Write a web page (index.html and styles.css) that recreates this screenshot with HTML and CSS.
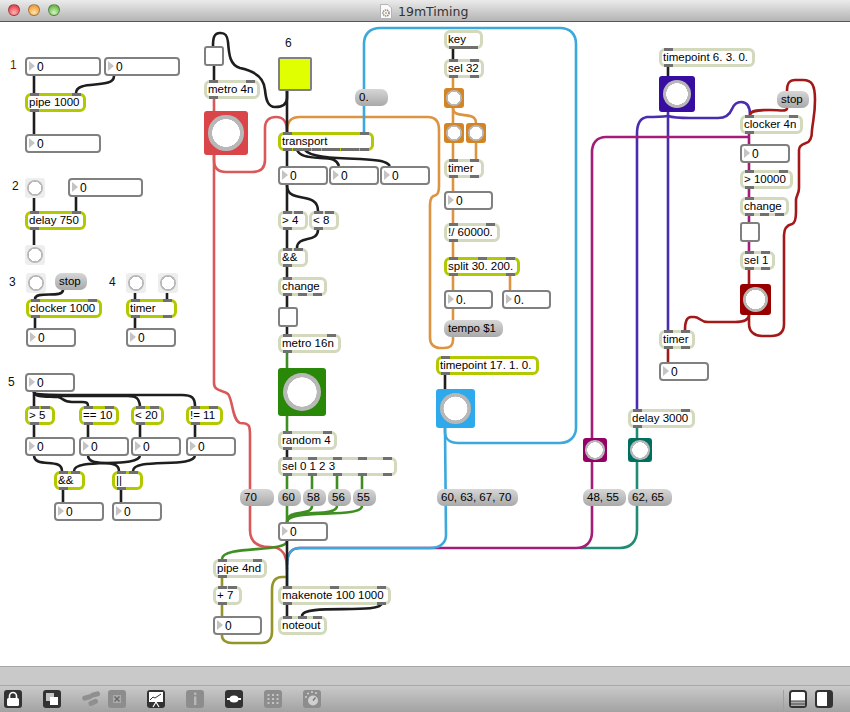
FILE: index.html
```html
<!DOCTYPE html>
<html lang="en">
<head>
    <meta charset="UTF-8">
    <title>19mTiming</title>
    <link rel="stylesheet" href="styles.css">
</head>
<body>
<div class="window">
    <header class="titlebar">
        <span class="light light-red"></span>
        <span class="light light-orange"></span>
        <span class="light light-green"></span>
        <div class="title">
            <svg class="doc-icon" width="12" height="15" viewBox="0 0 12 15">
                <path d="M.5.5H8L11.5 4V14.5H.5Z" fill="#fafafa" stroke="#b5b5b5"/>
                <circle cx="6" cy="9" r="3" fill="none" stroke="#8a8f96" stroke-width="1.6" stroke-dasharray="1.4 .7"/>
                <circle cx="6" cy="9" r="1" fill="#e0a040"/>
            </svg>
            <span>19mTiming</span>
        </div>
    </header>

    <main class="canvas">
        <svg class="wires" width="850" height="644" viewBox="0 22 850 644">
            <g class="wire-teal">
                <path d="M637 428V438"/>
                <path d="M637 462V530C637 542 630 548 620 548H580"/>
            </g>
            <g class="wire-purple">
                <path d="M668 112V330"/>
                <path d="M668 116C660 117 652 117 647 117C640 118 637 124 637 134V409"/>
                <path d="M668 116C674 118 680 118 690 118H718C726 118 730 114 732 109C734 104 737 102 741 102C747 102 750 106 750 115"/>
            </g>
            <g class="wire-magenta">
                <path d="M749 137H606C597 137 592 143 592 152V438"/>
                <path d="M592 462V532C592 542 586 548 576 548H300C292 548 287 552 287 565"/>
                <path d="M749 134V144M749 163V170M749 189V197M749 216V222M749 242V251"/>
            </g>
            <g class="wire-darkred">
                <path d="M749 270V284M668 349V362"/>
                <path d="M787 108C787 112 780 110 770 110C760 110 750 110 750 115"/>
                <path d="M749 315V324C749 332 755 336 762 336H771C780 336 784 332 784 324V235C784 228 788 225 792 224C795 223 796 218 796 212V200C796 196 799 194 799 188V150C799 145 803 144 806 143C810 142 812 138 812 130C813 120 815 115 815 100C815 85 812 80 803 80H795C790 80 787 82 787 91"/>
                <path d="M749 315C749 320 745 322 735 322H708C700 322 700 317 694 317H691C687 317 685 320 685 330"/>
            </g>
            <g class="wire-orange">
                <path d="M453 337V340C453 346 450 348 444 348H440C434 348 430 344 430 338V205C430 198 432 196 436 195C438 194 439 190 439 186V130C439 120 434 117 428 117H300C292 117 287 120 287 132"/>
                <path d="M453 78V88M453 108V123M453 143V159M476 143V159M453 178V191M453 210V223M453 242V257M510 275V290M453 275V290M453 309V320"/>
                <path d="M453 108C453 120 476 110 476 123"/>
            </g>
            <g class="wire-red">
                <path d="M214 99V111"/>
                <path d="M214 155V383C214 392 224 390 228 394C233 400 232 420 240 423C250 423 250 426 250 436V530C250 545 262 547 270 547C283 547 287 555 287 570"/>
                <path d="M214 155V160C214 168 218 172 226 172H252C261 172 265 168 265 160V128C265 120 270 117 276 117C284 117 287 122 287 132"/>
            </g>
            <g class="wire-olive">
                <path d="M222 577V586M222 603V616"/>
                <path d="M222 634V636C222 640 226 643 232 643H262C268 643 272 639 272 632V590C272 581 276 577 282 577H287"/>
            </g>
            <g class="wire-green">
                <path d="M287 353V368M287 416V431M287 476V489M312 476V489M337 476V489M362 476V489M287 506V522"/>
                <path d="M312 506C312 517 287 508 287 522"/>
                <path d="M337 506C337 518 287 508 287 522"/>
                <path d="M362 506C362 519 287 508 287 522"/>
                <path d="M287 541C287 553 222 545 222 559"/>
            </g>
            <g class="wire-blue">
                <path d="M445 428V432C445 439 450 443 458 443H560C570 443 576 436 576 428V44C576 34 570 28 560 28H380C370 28 364 34 364 44V132"/>
                <path d="M445 428L446 535C446 543 440 548 430 548H300C292 548 287 552 287 565V586"/>
            </g>
            <g class="wire-black">
                <path d="M34 76V93M34 112V134M34 198V211M76 197V211M34 230V245M35 318V328M135 293V299M167 293V299M135 318V328"/>
                <path d="M114 76C114 90 76 79 76 93"/>
                <path d="M63 290C63 299 35 290 35 299"/>
                <path d="M34 392V406M34 425V437M88 425V437M140 425V437M195 425V437M63 489V502M121 489V502"/>
                <path d="M34 392C34 398 50 396 58 397C64 398 62 402 72 402H82C87 402 88 403 88 406"/>
                <path d="M34 392C34 396 50 396 70 396H128C136 396 139 398 140 406"/>
                <path d="M34 392C34 395 50 395 70 395H182C192 395 195 398 195 406"/>
                <path d="M34 455C34 469 62 457 62 471"/>
                <path d="M140 455C140 469 74 457 74 471"/>
                <path d="M88 455C88 469 119 457 119 471"/>
                <path d="M195 455C195 469 133 457 133 471"/>
                <path d="M214 66V80"/>
                <path d="M287 91V98C287 106 280 107 275 107C268 107 266 100 265 90C264 75 250 70 240 68C230 65 229 55 228 42C227 32 222 33 220 33C214 33 213 38 213 46"/>
                <path d="M287 91V132M287 150V166M287 185V211M287 230V248M287 266V277M287 295V307M287 327V334M287 449V457M287 541V586M287 603V616"/>
                <path d="M297 150C300 156 306 157 320 158C333 158 337 160 339 166"/>
                <path d="M305 150C310 157 330 158 360 159C380 160 386 161 390 166"/>
                <path d="M287 185C287 205 318 190 318 211"/>
                <path d="M318 230C318 243 297 235 297 248"/>
                <path d="M382 603C382 615 302 603 302 616"/>
                <path d="M453 49V59M445 375V389M668 67V76"/>
            </g>
        </svg>

        <span class="label label-one">1</span>
        <span class="label label-two">2</span>
        <span class="label label-three">3</span>
        <span class="label label-four">4</span>
        <span class="label label-five">5</span>
        <span class="label label-six">6</span>

        <!-- 1 pipe -->
        <div class="num n-pipe-a">0</div>
        <div class="num n-pipe-b">0</div>
        <div class="obj lime o-pipe"><span class="ports in"><b></b><b></b></span>pipe 1000<span class="ports out"><b></b></span></div>
        <div class="num n-pipe-c">0</div>

        <!-- 2 delay -->
        <div class="bang b-delay-a"></div>
        <div class="num n-delay">0</div>
        <div class="obj lime o-delay"><span class="ports in"><b></b><b></b></span>delay 750<span class="ports out"><b></b></span></div>
        <div class="bang b-delay-b"></div>

        <!-- 3 clocker -->
        <div class="bang b-clocker"></div>
        <div class="msg m-stop-a">stop</div>
        <div class="obj lime o-clocker"><span class="ports in"><b></b><b></b></span>clocker 1000<span class="ports out"><b></b></span></div>
        <div class="num n-clocker">0</div>

        <!-- 4 timer -->
        <div class="bang b-timer-a"></div>
        <div class="bang b-timer-b"></div>
        <div class="obj lime o-timer"><span class="ports in"><b></b><b></b></span>timer<span class="ports out"><b></b><b></b></span></div>
        <div class="num n-timer">0</div>

        <!-- 5 logic -->
        <div class="num n-logic">0</div>
        <div class="obj lime o-gt5"><span class="ports in"><b></b><b></b></span>&gt; 5<span class="ports out"><b></b></span></div>
        <div class="obj lime o-eq10"><span class="ports in"><b></b><b></b></span>== 10<span class="ports out"><b></b></span></div>
        <div class="obj lime o-lt20"><span class="ports in"><b></b><b></b></span>&lt; 20<span class="ports out"><b></b></span></div>
        <div class="obj lime o-ne11"><span class="ports in"><b></b><b></b></span>!= 11<span class="ports out"><b></b></span></div>
        <div class="num n-gt5">0</div>
        <div class="num n-eq10">0</div>
        <div class="num n-lt20">0</div>
        <div class="num n-ne11">0</div>
        <div class="obj lime o-and"><span class="ports in"><b></b><b></b></span>&amp;&amp;<span class="ports out"><b></b></span></div>
        <div class="obj lime o-or"><span class="ports in"><b></b><b></b></span>||<span class="ports out"><b></b></span></div>
        <div class="num n-and">0</div>
        <div class="num n-or">0</div>

        <!-- metro 4n -->
        <div class="toggle t-metro"></div>
        <div class="obj o-metro4"><span class="ports in"><b></b><b></b></span>metro 4n<span class="ports out"><b></b></span></div>
        <div class="bang bang-red b-metro4"></div>

        <!-- transport column -->
        <div class="yellow"></div>
        <div class="msg m-zero">0.</div>
        <div class="obj lime o-transport"><span class="ports in"><b></b><b></b></span>transport<span class="ports out"><b></b><b></b><b></b><b></b><b></b><b></b><b></b><b></b><b></b></span></div>
        <div class="num n-bars">0</div>
        <div class="num n-beats">0</div>
        <div class="num n-units">0</div>
        <div class="obj o-gt4"><span class="ports in"><b></b><b></b></span>&gt; 4<span class="ports out"><b></b></span></div>
        <div class="obj o-lt8"><span class="ports in"><b></b><b></b></span>&lt; 8<span class="ports out"><b></b></span></div>
        <div class="obj o-and2"><span class="ports in"><b></b><b></b></span>&amp;&amp;<span class="ports out"><b></b></span></div>
        <div class="obj o-change"><span class="ports in"><b></b></span>change<span class="ports out"><b></b><b></b><b></b></span></div>
        <div class="toggle t-column"></div>
        <div class="obj o-metro16"><span class="ports in"><b></b><b></b></span>metro 16n<span class="ports out"><b></b></span></div>
        <div class="bang bang-green b-metro16"></div>
        <div class="obj o-random"><span class="ports in"><b></b><b></b></span>random 4<span class="ports out"><b></b></span></div>
        <div class="obj o-sel"><span class="ports in"><b></b><b></b><b></b><b></b><b></b></span>sel 0 1 2 3<span class="ports out"><b></b><b></b><b></b><b></b><b></b></span></div>
        <div class="msg m-70">70</div>
        <div class="msg m-60">60</div>
        <div class="msg m-58">58</div>
        <div class="msg m-56">56</div>
        <div class="msg m-55">55</div>
        <div class="num n-note">0</div>
        <div class="obj o-pipe4"><span class="ports in"><b></b><b></b></span>pipe 4nd<span class="ports out"><b></b></span></div>
        <div class="obj o-plus7"><span class="ports in"><b></b><b></b></span>+ 7<span class="ports out"><b></b></span></div>
        <div class="num n-plus7">0</div>
        <div class="obj o-makenote"><span class="ports in"><b></b><b></b><b></b></span>makenote 100 1000<span class="ports out"><b></b><b></b></span></div>
        <div class="obj o-noteout"><span class="ports in"><b></b><b></b><b></b></span>noteout</div>

        <!-- tap tempo -->
        <div class="obj o-key">key<span class="ports out"><b></b><b></b><b></b><b></b></span></div>
        <div class="obj o-sel32"><span class="ports in"><b></b><b></b></span>sel 32<span class="ports out"><b></b><b></b></span></div>
        <div class="bang bang-orange b-tap-a"></div>
        <div class="bang bang-orange b-tap-b"></div>
        <div class="bang bang-orange b-tap-c"></div>
        <div class="obj o-taptimer"><span class="ports in"><b></b><b></b></span>timer<span class="ports out"><b></b><b></b></span></div>
        <div class="num n-tap">0</div>
        <div class="obj o-div"><span class="ports in"><b></b><b></b></span>!/ 60000.<span class="ports out"><b></b></span></div>
        <div class="obj lime o-split"><span class="ports in"><b></b><b></b><b></b></span>split 30. 200.<span class="ports out"><b></b><b></b></span></div>
        <div class="num n-split-a">0.</div>
        <div class="num n-split-b">0.</div>
        <div class="msg m-tempo">tempo $1</div>
        <div class="obj lime o-tp17"><span class="ports in"><b></b></span>timepoint 17. 1. 0.<span class="ports out"><b></b></span></div>
        <div class="bang bang-blue b-tp17"></div>
        <div class="msg m-chord-a">60, 63, 67, 70</div>

        <!-- chords -->
        <div class="bang bang-magenta b-magenta"></div>
        <div class="bang bang-teal b-teal"></div>
        <div class="msg m-chord-b">48, 55</div>
        <div class="msg m-chord-c">62, 65</div>
        <div class="obj o-delay3000"><span class="ports in"><b></b><b></b></span>delay 3000<span class="ports out"><b></b></span></div>

        <!-- timepoint 6 -->
        <div class="obj o-tp6"><span class="ports in"><b></b></span>timepoint 6. 3. 0.<span class="ports out"><b></b></span></div>
        <div class="bang bang-purple b-tp6"></div>
        <div class="msg m-stop-b">stop</div>
        <div class="obj o-clocker4"><span class="ports in"><b></b><b></b></span>clocker 4n<span class="ports out"><b></b></span></div>
        <div class="num n-clocker4">0</div>
        <div class="obj o-gt10000"><span class="ports in"><b></b><b></b></span>&gt; 10000<span class="ports out"><b></b></span></div>
        <div class="obj o-change2"><span class="ports in"><b></b></span>change<span class="ports out"><b></b><b></b><b></b></span></div>
        <div class="toggle t-right"></div>
        <div class="obj o-sel1"><span class="ports in"><b></b><b></b></span>sel 1<span class="ports out"><b></b><b></b></span></div>
        <div class="bang bang-darkred b-sel1"></div>
        <div class="obj o-timer2"><span class="ports in"><b></b><b></b></span>timer<span class="ports out"><b></b><b></b></span></div>
        <div class="num n-timer2">0</div>
    </main>

    <footer class="footer">
        <div class="statusband"></div>
        <div class="toolbar">
            <span class="tool">
                <svg width="18" height="18" viewBox="0 0 18 18"><path d="M5.5 8V6a3.5 3.5 0 0 1 7 0V8" fill="none" stroke="#fff" stroke-width="1.6"/><rect x="3" y="8" width="12" height="8" rx="1.5" fill="#fff"/></svg>
            </span>
            <span class="tool">
                <svg width="18" height="18" viewBox="0 0 18 18"><rect x="3" y="3" width="8" height="8" fill="#c4c4c4"/><rect x="7" y="7" width="8" height="8" fill="#fff"/></svg>
            </span>
            <span class="tool tool-off tool-plain">
                <svg width="18" height="18" viewBox="0 0 18 18"><g fill="#8f8f8f"><rect x="0" y="5" width="10" height="5" rx="2.5" transform="rotate(-15 5 7)"/><rect x="8" y="2" width="10" height="5" rx="2.5" transform="rotate(-15 13 4)"/><rect x="6" y="10" width="10" height="5" rx="2.5" transform="rotate(-25 11 12)"/></g></svg>
            </span>
            <span class="tool tool-off tool-near">
                <svg width="18" height="18" viewBox="0 0 18 18"><rect x="5" y="5" width="8" height="8" fill="#ababab"/><path d="M6.5 6.5l5 5M11.5 6.5l-5 5" stroke="#666" stroke-width="1.4"/></svg>
            </span>
            <span class="tool">
                <svg width="18" height="18" viewBox="0 0 18 18"><rect x="2" y="2" width="14" height="10" fill="#fff"/><path d="M3 10l3-3 2 1 6-4" fill="none" stroke="#333" stroke-width="1"/><path d="M9 12l-3 5M9 12l3 5" stroke="#fff" stroke-width="1.2"/></svg>
            </span>
            <span class="tool tool-off">
                <svg width="18" height="18" viewBox="0 0 18 18"><rect x="8" y="2.5" width="2.4" height="2.4" fill="#b8b8b8"/><rect x="8" y="6.5" width="2.4" height="8.5" fill="#b8b8b8"/></svg>
            </span>
            <span class="tool">
                <svg width="18" height="18" viewBox="0 0 18 18"><path d="M2 9H16" stroke="#fff" stroke-width="2"/><ellipse cx="9" cy="9" rx="4.5" ry="3.5" fill="#fff"/></svg>
            </span>
            <span class="tool tool-off">
                <svg width="18" height="18" viewBox="0 0 18 18"><g fill="#c4c4c4"><rect x="3.5" y="4" width="2" height="2"/><rect x="8" y="4" width="2" height="2"/><rect x="12.5" y="4" width="2" height="2"/><rect x="3.5" y="8" width="2" height="2"/><rect x="8" y="8" width="2" height="2"/><rect x="12.5" y="8" width="2" height="2"/><rect x="3.5" y="12" width="2" height="2"/><rect x="8" y="12" width="2" height="2"/><rect x="12.5" y="12" width="2" height="2"/></g></svg>
            </span>
            <span class="tool tool-off">
                <svg width="18" height="18" viewBox="0 0 18 18"><circle cx="10" cy="10.5" r="5" fill="#d0d0d0"/><path d="M10 10.5l2.5-3" stroke="#777" stroke-width="1.4"/><g fill="#d0d0d0"><circle cx="3" cy="7" r="1"/><circle cx="5" cy="3.5" r="1"/><circle cx="9" cy="2" r="1"/><circle cx="13" cy="3" r="1"/></g></svg>
            </span>
            <span class="toolbar-right">
                <span class="tool tool-frame">
                    <svg width="18" height="18" viewBox="0 0 18 18"><rect x="1" y="1" width="16" height="16" rx="2.5" fill="#fff" stroke="#333" stroke-width="2"/><rect x="2" y="11" width="14" height="5" fill="#aaa"/><path d="M2 11H16M2 14H16" stroke="#444" stroke-width="1"/></svg>
                </span>
                <span class="tool tool-frame">
                    <svg width="18" height="18" viewBox="0 0 18 18"><rect x="1" y="1" width="16" height="16" rx="2.5" fill="#fff" stroke="#333" stroke-width="2"/><rect x="12" y="1" width="5" height="16" fill="#333"/></svg>
                </span>
            </span>
        </div>
    </footer>
</div>
</body>
</html>
```

FILE: styles.css
```css
* {
    box-sizing: border-box;
}
body {
    margin: 0;
    font-family: "Liberation Sans", Arial, sans-serif;
    font-size: 11.5px;
    color: #000;
    background: #fff;
}
.window {
    display: flex;
    flex-direction: column;
    width: 850px;
    height: 712px;
    overflow: hidden;
}

/* title bar */
.titlebar {
    position: relative;
    display: flex;
    align-items: center;
    flex: 0 0 22px;
    gap: 8px;
    padding: 0 0 1px 8px;
    background: linear-gradient(#ebebeb, #b4b4b4);
    border-bottom: 1px solid #585858;
}
.light {
    width: 12px;
    height: 12px;
    border-radius: 50%;
    border: 1px solid rgba(0,0,0,0.3);
}
.light-red {
    background: radial-gradient(circle at 50% 75%, #ffb4b4, #e8434c 75%);
}
.light-orange {
    background: radial-gradient(circle at 50% 75%, #ffe4a8, #ee9c3c 75%);
}
.light-green {
    background: radial-gradient(circle at 50% 75%, #d4f4bc, #68b84c 75%);
}
.title {
    position: absolute;
    top: 4px;
    left: 380px;
    display: flex;
    gap: 6px;
    font-family: "DejaVu Sans", sans-serif;
    font-size: 12.5px;
    line-height: 15px;
    color: #333;
}

/* canvas and wires */
.canvas {
    position: relative;
    flex: 1;
    background: #fff;
}
.wires {
    position: absolute;
    top: 0;
    left: 0;
    fill: none;
    stroke-width: 2.6;
}
.wire-black { stroke: #1e1e1e; }
.wire-red { stroke: #d9585a; }
.wire-orange { stroke: #dd9440; }
.wire-blue { stroke: #3ca8dc; }
.wire-purple { stroke: #4a2cae; }
.wire-magenta { stroke: #a31c78; }
.wire-teal { stroke: #1f8c74; }
.wire-green { stroke: #3f8e22; }
.wire-darkred { stroke: #a31818; }
.wire-olive { stroke: #949428; }

.label {
    position: absolute;
    font-size: 12px;
    line-height: 14px;
    color: #111;
}
.label-one { left: 10px; top: 36px; color: #6d1c00; }
.label-two { left: 12px; top: 157px; }
.label-three { left: 9px; top: 253px; }
.label-four { left: 109px; top: 253px; }
.label-five { left: 8px; top: 353px; }
.label-six { left: 285px; top: 14px; }

/* objects */
.obj, .num, .msg, .bang, .toggle, .yellow {
    position: absolute;
}
.obj {
    height: 19px;
    padding-left: 1px;
    line-height: 13px;
    white-space: nowrap;
    background: #fff;
    border: 3px solid #d2d9bd;
    border-radius: 6px;
}
.lime {
    border-color: #b2c800;
}
.ports {
    position: absolute;
    left: -3px;
    right: -3px;
    display: flex;
    justify-content: space-between;
    padding: 0 5px;
}
.ports.in { top: -3px; }
.ports.out { bottom: -3px; }
.ports b {
    width: 9px;
    height: 3px;
    background: #707070;
}

.num {
    display: flex;
    align-items: center;
    width: 50px;
    height: 19px;
    padding-left: 10px;
    font-size: 12px;
    background: #fff;
    border: 2px solid #808080;
    border-radius: 4px;
}
.num::before {
    content: "";
    position: absolute;
    left: 2px;
    top: 2px;
    border-left: 6px solid #c4c4c4;
    border-top: 5px solid transparent;
    border-bottom: 5px solid transparent;
}

.msg {
    height: 17px;
    padding-left: 4px;
    line-height: 16px;
    white-space: nowrap;
    background: linear-gradient(#d6d6d6, #a9a9a9);
    border-radius: 7px;
}

.bang {
    display: flex;
    align-items: center;
    justify-content: center;
    width: 20px;
    height: 20px;
    background: #eeeeee;
    border-radius: 3px;
}
.bang::after {
    content: "";
    width: 80%;
    height: 80%;
    border-radius: 50%;
    background: radial-gradient(closest-side, #fff 76%, #b8b8b8 78%);
}
.bang-red { background: #d94548; }
.bang-green { background: #2a8808; }
.bang-orange { background: #d38424; }
.bang-blue { background: #2eaaec; }
.bang-magenta { background: #950066; }
.bang-teal { background: #006f60; }
.bang-purple { background: #370ea0; }
.bang-darkred { background: #980000; }

.toggle {
    width: 20px;
    height: 20px;
    background: #fff;
    border: 2px solid #808080;
    border-radius: 3px;
}
.yellow {
    left: 278px;
    top: 35px;
    width: 34px;
    height: 34px;
    background: #e0ff00;
    border: 2px solid #808080;
    border-radius: 2px;
}

/* placement on the patcher: top is measured from the canvas, y - 22 */
.n-pipe-a { left: 25px; top: 35px; width: 76px; }
.n-pipe-b { left: 104px; top: 35px; width: 76px; }
.o-pipe { left: 25px; top: 71px; width: 61px; }
.n-pipe-c { left: 25px; top: 112px; width: 76px; }

.b-delay-a { left: 25px; top: 156px; }
.n-delay { left: 68px; top: 156px; width: 75px; }
.o-delay { left: 25px; top: 189px; width: 61px; }
.b-delay-b { left: 25px; top: 223px; }

.b-clocker { left: 26px; top: 251px; }
.m-stop-a { left: 55px; top: 251px; width: 32px; }
.o-clocker { left: 26px; top: 277px; width: 76px; }
.n-clocker { left: 26px; top: 306px; }

.b-timer-a { left: 126px; top: 251px; }
.b-timer-b { left: 158px; top: 251px; }
.o-timer { left: 126px; top: 277px; width: 51px; }
.n-timer { left: 126px; top: 306px; }

.n-logic { left: 25px; top: 351px; }
.o-gt5 { left: 25px; top: 384px; width: 30px; }
.o-eq10 { left: 79px; top: 384px; width: 40px; }
.o-lt20 { left: 131px; top: 384px; width: 33px; }
.o-ne11 { left: 186px; top: 384px; width: 37px; }
.n-gt5 { left: 25px; top: 415px; }
.n-eq10 { left: 79px; top: 415px; }
.n-lt20 { left: 131px; top: 415px; }
.n-ne11 { left: 186px; top: 415px; }
.o-and { left: 54px; top: 449px; width: 31px; }
.o-or { left: 112px; top: 449px; width: 31px; }
.n-and { left: 54px; top: 480px; }
.n-or { left: 112px; top: 480px; }

.t-metro { left: 204px; top: 24px; }
.o-metro4 { left: 204px; top: 58px; width: 56px; }
.b-metro4 { left: 204px; top: 89px; width: 44px; height: 44px; }

.m-zero { left: 355px; top: 67px; width: 33px; }
.o-transport { left: 278px; top: 110px; width: 96px; }
.n-bars { left: 278px; top: 144px; }
.n-beats { left: 329px; top: 144px; }
.n-units { left: 380px; top: 144px; }
.o-gt4 { left: 278px; top: 189px; width: 30px; }
.o-lt8 { left: 309px; top: 189px; width: 30px; }
.o-and2 { left: 278px; top: 226px; width: 30px; }
.o-change { left: 278px; top: 255px; width: 49px; }
.t-column { left: 278px; top: 285px; }
.o-metro16 { left: 278px; top: 312px; width: 63px; }
.b-metro16 { left: 278px; top: 346px; width: 48px; height: 48px; }
.o-random { left: 278px; top: 409px; width: 59px; }
.o-sel { left: 278px; top: 435px; width: 119px; }
.m-70 { left: 240px; top: 467px; width: 34px; }
.m-60 { left: 278px; top: 467px; width: 23px; }
.m-58 { left: 303px; top: 467px; width: 23px; }
.m-56 { left: 328px; top: 467px; width: 23px; }
.m-55 { left: 353px; top: 467px; width: 23px; }
.n-note { left: 278px; top: 500px; }
.o-pipe4 { left: 213px; top: 537px; width: 54px; }
.o-plus7 { left: 213px; top: 564px; width: 29px; }
.n-plus7 { left: 213px; top: 594px; width: 49px; }
.o-makenote { left: 278px; top: 564px; width: 113px; }
.o-noteout { left: 278px; top: 594px; width: 49px; }

.o-key { left: 444px; top: 8px; width: 39px; }
.o-sel32 { left: 444px; top: 37px; width: 40px; }
.b-tap-a { left: 444px; top: 66px; }
.b-tap-b { left: 444px; top: 101px; }
.b-tap-c { left: 466px; top: 101px; }
.o-taptimer { left: 444px; top: 137px; width: 40px; }
.n-tap { left: 444px; top: 169px; width: 49px; }
.o-div { left: 444px; top: 201px; width: 56px; }
.o-split { left: 444px; top: 235px; width: 76px; }
.n-split-a { left: 444px; top: 268px; width: 49px; }
.n-split-b { left: 502px; top: 268px; width: 49px; }
.m-tempo { left: 444px; top: 298px; width: 59px; }
.o-tp17 { left: 436px; top: 334px; width: 103px; }
.b-tp17 { left: 436px; top: 367px; width: 39px; height: 39px; }
.m-chord-a { left: 437px; top: 467px; width: 81px; }

.b-magenta { left: 583px; top: 416px; width: 24px; height: 24px; }
.b-teal { left: 628px; top: 416px; width: 24px; height: 24px; }
.m-chord-b { left: 583px; top: 467px; width: 43px; }
.m-chord-c { left: 628px; top: 467px; width: 44px; }
.o-delay3000 { left: 628px; top: 387px; width: 67px; }

.o-tp6 { left: 659px; top: 26px; width: 96px; }
.b-tp6 { left: 659px; top: 54px; width: 36px; height: 36px; }
.m-stop-b { left: 777px; top: 69px; width: 32px; }
.o-clocker4 { left: 740px; top: 93px; width: 63px; }
.n-clocker4 { left: 740px; top: 122px; }
.o-gt10000 { left: 740px; top: 148px; width: 53px; }
.o-change2 { left: 740px; top: 175px; width: 49px; }
.t-right { left: 740px; top: 200px; }
.o-sel1 { left: 740px; top: 229px; width: 35px; }
.b-sel1 { left: 740px; top: 262px; width: 31px; height: 31px; }
.o-timer2 { left: 659px; top: 308px; width: 36px; }
.n-timer2 { left: 659px; top: 340px; }

/* bottom bars */
.footer {
    flex: 0 0 46px;
    display: flex;
    flex-direction: column;
    border-top: 1px solid #a8a8a8;
}
.statusband {
    flex: 0 0 19px;
    background: #c9c9c9;
    border-bottom: 1px solid #a9a9a9;
}
.toolbar {
    flex: 1;
    display: flex;
    align-items: flex-start;
    gap: 21px;
    padding: 4px 17px 0 4px;
    background: linear-gradient(#c9c9c9, #a2a2a2);
}
.tool {
    display: block;
    width: 18px;
    height: 18px;
    background: #333;
    border-radius: 3px;
}
.tool svg {
    display: block;
}
.tool-off {
    background: #8d8d8d;
}
.tool-plain {
    background: none;
}
.tool-near {
    margin-left: -13px;
}
.tool-frame {
    background: none;
}
.toolbar-right {
    display: flex;
    gap: 8px;
    margin-left: auto;
    padding-left: 5px;
    height: 22px;
    border-left: 1px solid #a0a0a0;
}
```
